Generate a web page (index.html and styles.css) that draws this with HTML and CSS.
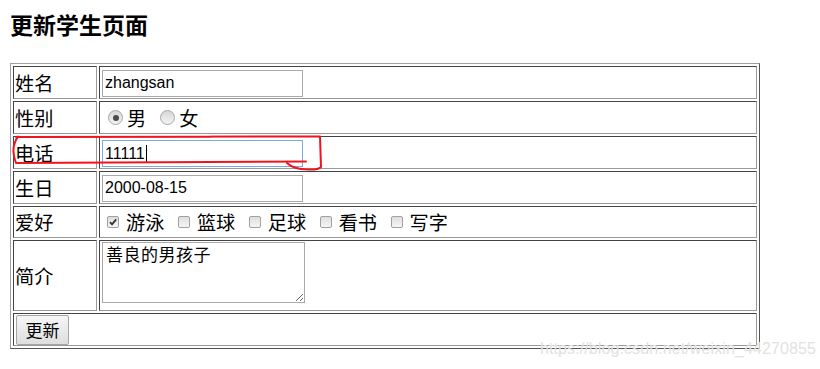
FILE: index.html
```html
<!DOCTYPE html>
<html lang="zh-CN">
<head>
<meta charset="utf-8">
<title>更新学生页面</title>
<link rel="stylesheet" href="styles.css">
</head>
<body>
<h3 class="title">更新学生页面</h3>
<form class="form">
<table class="grid">
  <tr class="row">
    <td class="lbl">姓名</td>
    <td class="val"><input class="field" type="text" value="zhangsan"></td>
  </tr>
  <tr class="row">
    <td class="lbl">性别</td>
    <td class="val">
      <div class="opts radios">
        <label class="opt"><span class="radio on"></span>男</label>
        <label class="opt"><span class="radio"></span>女</label>
      </div>
    </td>
  </tr>
  <tr class="row">
    <td class="lbl">电话</td>
    <td class="val"><span class="wrap"><input class="field focus" type="text" value="11111"><span class="caret"></span></span></td>
  </tr>
  <tr class="row">
    <td class="lbl">生日</td>
    <td class="val"><input class="field" type="text" value="2000-08-15"></td>
  </tr>
  <tr class="row short">
    <td class="lbl">爱好</td>
    <td class="val">
      <div class="opts checks">
        <label class="opt"><span class="check on"><svg viewBox="0 0 12 12" width="12" height="12"><path d="M3 6.2 L5 8.3 L9.2 3.4" fill="none" stroke="#333" stroke-width="1.8"/></svg></span>游泳</label>
        <label class="opt"><span class="check"></span>篮球</label>
        <label class="opt"><span class="check"></span>足球</label>
        <label class="opt"><span class="check"></span>看书</label>
        <label class="opt"><span class="check"></span>写字</label>
      </div>
    </td>
  </tr>
  <tr class="row tall">
    <td class="lbl">简介</td>
    <td class="val top"><textarea class="area">善良的男孩子</textarea></td>
  </tr>
  <tr class="row">
    <td class="val" colspan="2"><button class="btn" type="button">更新</button></td>
  </tr>
</table>
</form>
<svg class="mark" width="820" height="369" viewBox="0 0 820 369">
  <path d="M16 137 L320 136.5 L321 167 Q318 170 308 169.5 Q293 169 287 163" fill="none" stroke="#f0141e" stroke-width="2" stroke-linecap="round" stroke-linejoin="round"/>
  <path d="M18 136.5 Q10 148 16 163 L306 161.5" fill="none" stroke="#f0141e" stroke-width="2" stroke-linecap="round" stroke-linejoin="round"/>
</svg>
<div class="watermark">https://blog.csdn.net/weixin_44270855</div>
</body>
</html>
```
FILE: styles.css
```css
html, body {
  margin: 0;
  padding: 0;
  background: #fff;
}
body {
  position: relative;
  width: 820px;
  height: 369px;
  overflow: hidden;
  padding: 0 10px;
  box-sizing: border-box;
  font-family: "Noto Sans CJK SC", "Liberation Sans", sans-serif;
  color: #000;
}
.title {
  margin: 11px 0 25px 0;
  font-size: 23px;
  line-height: 27px;
  font-weight: bold;
}
.form {
  margin: 0;
}
.grid {
  width: 750px;
  border-collapse: separate;
  border-spacing: 2px;
  border: 1px solid;
  border-color: #a0a0a0 #555 #555 #a0a0a0;
  table-layout: fixed;
}
.grid td {
  border: 1px solid;
  border-color: #444 #999 #999 #444;
  padding: 0 1px;
  font-size: 19.2px;
  line-height: 24px;
  vertical-align: middle;
}
.grid td.top {
  vertical-align: top;
}
.row {
  height: 33px;
}
.row.short {
  height: 32px;
}
.row.tall {
  height: 71px;
}
.lbl {
  width: 84px;
  box-sizing: border-box;
}
.field {
  display: block;
  box-sizing: border-box;
  width: 201px;
  height: 27px;
  margin: 1px 0 0 1px;
  padding: 0 2px;
  border: 1px solid #a9a9a9;
  font-family: "Liberation Sans", Arial, sans-serif;
  font-size: 16px;
  color: #000;
  background: #fff;
  outline: none;
}
.field.focus {
  border-color: #7ea6e0;
  margin: 0;
}
.wrap {
  position: relative;
  display: block;
  width: 201px;
  margin: 2px 0 0 1px;
}
.caret {
  position: absolute;
  left: 44px;
  top: 5px;
  width: 1px;
  height: 17px;
  background: #000;
}
.opts {
  display: flex;
  align-items: center;
}
.radios {
  padding-left: 7px;
  gap: 14px;
}
.checks {
  padding-left: 6px;
  gap: 13.5px;
}
.opt {
  display: inline-flex;
  align-items: center;
}
.radio {
  display: inline-block;
  box-sizing: border-box;
  width: 15px;
  height: 15px;
  margin-right: 4px;
  border: 1px solid #a6a6a6;
  border-radius: 50%;
  background: linear-gradient(#d6d6d6, #f4f4f4);
  position: relative;
}
.radio.on::after {
  content: "";
  position: absolute;
  left: 3.5px;
  top: 3.5px;
  width: 6px;
  height: 6px;
  border-radius: 50%;
  background: #4a4a4a;
}
.check {
  display: inline-flex;
  align-items: center;
  justify-content: center;
  box-sizing: border-box;
  width: 12px;
  height: 12px;
  margin-right: 7px;
  border: 1px solid #a0a0a0;
  border-radius: 2px;
  background: linear-gradient(#dedede, #f5f5f5);
}
.check svg {
  display: block;
  flex: none;
}
.area {
  display: block;
  box-sizing: border-box;
  width: 203px;
  height: 61px;
  margin: 1px 0 0 1px;
  padding: 1px 3px;
  border: 1px solid #a9a9a9;
  font-family: "Noto Sans CJK SC", sans-serif;
  font-size: 17px;
  line-height: 20px;
  letter-spacing: 0.5px;
  color: #000;
  resize: both;
}
.btn {
  display: block;
  box-sizing: border-box;
  width: 53px;
  height: 30px;
  margin: 1px 0 0 1px;
  padding: 0;
  border: 1px solid #a6a6a6;
  border-radius: 2px;
  background: linear-gradient(#f6f6f6, #dedede);
  font-family: "Noto Sans CJK SC", sans-serif;
  font-size: 17px;
  line-height: 28px;
  color: #000;
}
.mark {
  position: absolute;
  left: 0;
  top: 0;
  pointer-events: none;
}
.watermark {
  position: absolute;
  left: 540px;
  top: 340px;
  font-family: "Liberation Sans", Arial, sans-serif;
  font-size: 16px;
  line-height: 18px;
  color: #e2e2e2;
  letter-spacing: 0.1px;
}
```
